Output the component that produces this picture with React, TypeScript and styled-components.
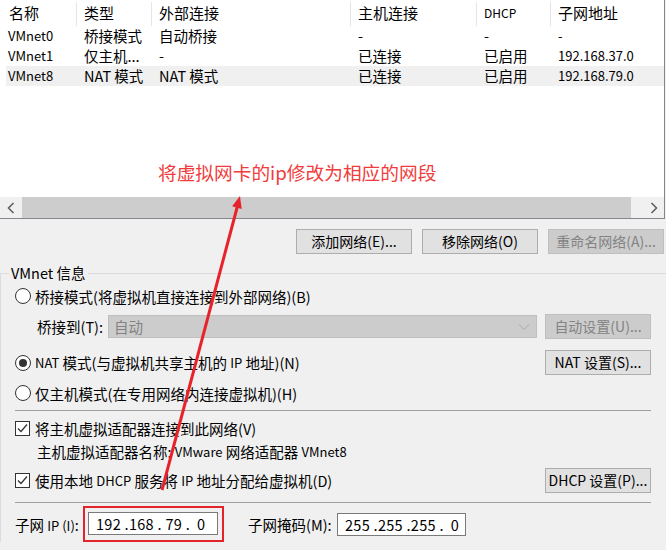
import React from "react";
import styled, { createGlobalStyle } from "styled-components";

const Global = createGlobalStyle`
  html, body { margin: 0; padding: 0; background: #f0f0f0; }
  * { box-sizing: border-box; }
  body { font-family: "Noto Sans CJK SC", "Noto Sans", sans-serif; color: #000; }
`;

const Root = styled.div`
  position: relative;
  width: 666px;
  height: 550px;
  overflow: hidden;
  background: #f0f0f0;
  font-size: 14px;
`;

const COLS = "77px 75px 199px 126px 74px 1fr";
const ROWCOLS = "71px 75px 199px 126px 74px 1fr";

const ListView = styled.div`
  width: 665px;
  height: 219px;
  background: #fff;
  border-right: 1px solid #828790;
  border-bottom: 1px solid #828790;
  display: flex;
  flex-direction: column;
`;

const Header = styled.div`
  display: grid;
  grid-template-columns: ${COLS};
  height: 26px;
`;

const HeaderCell = styled.div<{ $small?: boolean; $first?: boolean; $last?: boolean }>`
  display: flex;
  align-items: center;
  padding-left: ${(p) => (p.$first ? 9 : 7)}px;
  padding-bottom: 4px;
  margin-top: 2px;
  height: 24px;
  font-size: ${(p) => (p.$small ? 12 : 15)}px;
  border-right: ${(p) => (p.$last ? "none" : "1px solid #e5e5e5")};
  white-space: nowrap;
`;

const Row = styled.div<{ $selected?: boolean }>`
  display: grid;
  grid-template-columns: ${ROWCOLS};
  height: 20px;
  margin-left: 6px;
  background: ${(p) => (p.$selected ? "#f0f0f0" : "transparent")};
`;

const Cell = styled.div<{ $small?: boolean; $first?: boolean }>`
  display: flex;
  align-items: center;
  padding-left: ${(p) => (p.$first ? 2 : 7)}px;
  padding-bottom: 2px;
  font-size: ${(p) => (p.$small ? 13 : 14.5)}px;
  white-space: nowrap;
  overflow: hidden;
`;

const Filler = styled.div`
  flex: 1;
`;

const ScrollBar = styled.div`
  display: flex;
  height: 21px;
  background: #f0f0f0;
`;

const ScrollArrow = styled.div<{ $w: number }>`
  width: ${(p) => p.$w}px;
  display: flex;
  align-items: center;
  justify-content: center;
`;

const Thumb = styled.div`
  width: 609px;
  background: #cdcdcd;
`;

const Track = styled.div`
  flex: 1;
`;

const ButtonRow = styled.div`
  display: flex;
  justify-content: flex-end;
  gap: 10px;
  padding: 10px 2px 0 0;
`;

const Button = styled.div<{ $w?: number; $disabled?: boolean }>`
  width: ${(p) => p.$w ?? 116}px;
  height: 25px;
  flex: none;
  display: flex;
  align-items: center;
  justify-content: center;
  font-size: 14px;
  padding-bottom: 1px;
  background: ${(p) => (p.$disabled ? "#cccccc" : "#e1e1e1")};
  border: 1px solid ${(p) => (p.$disabled ? "#bfbfbf" : "#adadad")};
  color: ${(p) => (p.$disabled ? "#838383" : "#000")};
  white-space: nowrap;
`;

const Group = styled.fieldset`
  margin: 9px 0 0 0;
  padding: 0 15px 0 14px;
  width: 666px;
  border: 1px solid #dcdcdc;
  border-right: none;
  border-bottom: none;
  min-inline-size: 0;
`;

const Legend = styled.legend`
  margin-left: -6px;
  padding: 0 2px;
  font-size: 14.5px;
  line-height: 20px;
`;

const Line = styled.div<{ $top: number; $h: number; $indent?: number }>`
  display: flex;
  align-items: center;
  margin-top: ${(p) => p.$top}px;
  height: ${(p) => p.$h}px;
  padding-left: ${(p) => p.$indent ?? 0}px;
  font-size: 14.5px;
  white-space: nowrap;
`;

const Radio = styled.span<{ $checked?: boolean }>`
  width: 16px;
  height: 16px;
  flex: none;
  border-radius: 50%;
  border: 1px solid #333;
  background: #fff;
  margin-right: 4px;
  display: flex;
  align-items: center;
  justify-content: center;
  &::after {
    content: "";
    width: 8px;
    height: 8px;
    border-radius: 50%;
    background: ${(p) => (p.$checked ? "#333" : "transparent")};
  }
`;

const CheckBox = styled.span`
  width: 15px;
  height: 15px;
  flex: none;
  border: 1px solid #333;
  background: #fff;
  margin-right: 5px;
  display: flex;
  align-items: center;
  justify-content: center;
`;

const Select = styled.div`
  margin-left: auto;
  width: 429px;
  height: 23px;
  background: #cccccc;
  border: 1px solid #bfbfbf;
  color: #838383;
  display: flex;
  align-items: center;
  justify-content: space-between;
  padding: 0 6px 0 5px;
  font-size: 14.5px;
`;

const SideButton = styled(Button)`
  margin-left: 8px;
`;

const PushRight = styled(Button)`
  margin-left: auto;
`;

const Separator = styled.div<{ $top: number }>`
  margin-top: ${(p) => p.$top}px;
  height: 1px;
  background: #a0a0a0;
`;

const Small = styled.span`
  font-size: 13px;
`;

const FieldLabel = styled.span<{ $w?: number }>`
  width: ${(p) => (p.$w ? `${p.$w}px` : "auto")};
  flex: none;
`;

const RedBox = styled.span`
  display: flex;
  border: 2px solid #e3222b;
  padding: 4px 4px 5px 3px;
  margin-left: -3px;
`;

const Input = styled.div<{ $w: number }>`
  width: ${(p) => p.$w}px;
  height: 23px;
  background: #fff;
  border: 1px solid #7a7a7a;
  display: flex;
  align-items: center;
  padding-left: 7px;
  font-size: 14.5px;
  letter-spacing: 0.3px;
  white-space: pre;
`;

const MaskLabel = styled.span`
  margin-left: 24px;
  width: 89px;
  flex: none;
`;

const Annotation = styled.div`
  position: absolute;
  left: 158px;
  top: 160px;
  color: #f03c3c;
  font-size: 18.7px;
  line-height: 24px;
  white-space: nowrap;
`;

const Overlay = styled.svg`
  position: absolute;
  left: 0;
  top: 0;
  pointer-events: none;
`;

const rows = [
  ["VMnet0", "桥接模式", "自动桥接", "-", "-", "-"],
  ["VMnet1", "仅主机...", "-", "已连接", "已启用", "192.168.37.0"],
  ["VMnet8", "NAT 模式", "NAT 模式", "已连接", "已启用", "192.168.79.0"],
];

const Check = () => (
  <svg width="13" height="13" viewBox="0 0 13 13">
    <polyline points="2,6.5 5,9.5 11,2.5" fill="none" stroke="#333" strokeWidth="1.3" />
  </svg>
);

export default function App() {
  return (
    <Root>
      <Global />
      <ListView>
        <Header>
          <HeaderCell $first>名称</HeaderCell>
          <HeaderCell>类型</HeaderCell>
          <HeaderCell>外部连接</HeaderCell>
          <HeaderCell>主机连接</HeaderCell>
          <HeaderCell $small>DHCP</HeaderCell>
          <HeaderCell $last>子网地址</HeaderCell>
        </Header>
        {rows.map((r, i) => (
          <Row key={r[0]} $selected={i === 2}>
            {r.map((c, j) => (
              <Cell key={j} $first={j === 0} $small={j === 0 || j === 5}>
                {c}
              </Cell>
            ))}
          </Row>
        ))}
        <Filler />
        <ScrollBar>
          <ScrollArrow $w={22}>
            <svg width="8" height="12" viewBox="0 0 8 12">
              <polyline points="6.5,1 1.5,6 6.5,11" fill="none" stroke="#606060" strokeWidth="1.6" />
            </svg>
          </ScrollArrow>
          <Thumb />
          <Track />
          <ScrollArrow $w={20}>
            <svg width="8" height="12" viewBox="0 0 8 12">
              <polyline points="1.5,1 6.5,6 1.5,11" fill="none" stroke="#606060" strokeWidth="1.6" />
            </svg>
          </ScrollArrow>
        </ScrollBar>
      </ListView>

      <ButtonRow>
        <Button>添加网络(E)...</Button>
        <Button>移除网络(O)</Button>
        <Button $disabled>重命名网络(A)...</Button>
      </ButtonRow>

      <Group>
        <Legend>VMnet 信息</Legend>
        <Line $top={1} $h={24}>
          <Radio />
          桥接模式(将虚拟机直接连接到外部网络)(B)
        </Line>
        <Line $top={6} $h={25} $indent={22}>
          <FieldLabel>桥接到(T):</FieldLabel>
          <Select>
            自动
            <svg width="12" height="8" viewBox="0 0 12 8">
              <polyline points="1,1.5 6,6.5 11,1.5" fill="none" stroke="#a8a8a8" strokeWidth="1" />
            </svg>
          </Select>
          <SideButton $w={106} $disabled>
            自动设置(U)...
          </SideButton>
        </Line>
        <Line $top={11} $h={25}>
          <Radio $checked />
          <Small>NAT</Small>&nbsp;模式(与虚拟机共享主机的&nbsp;<Small>IP</Small>&nbsp;地址)(N)
          <PushRight $w={106}>NAT 设置(S)...</PushRight>
        </Line>
        <Line $top={6} $h={24}>
          <Radio />
          仅主机模式(在专用网络内连接虚拟机)(H)
        </Line>
        <Separator $top={5} />
        <Line $top={7} $h={20}>
          <CheckBox>
            <Check />
          </CheckBox>
          将主机虚拟适配器连接到此网络(V)
        </Line>
        <Line $top={3} $h={20} $indent={22}>
          主机虚拟适配器名称:&nbsp;<Small>VMware</Small>&nbsp;网络适配器&nbsp;<Small>VMnet8</Small>
        </Line>
        <Line $top={7} $h={25}>
          <CheckBox>
            <Check />
          </CheckBox>
          使用本地&nbsp;<Small>DHCP</Small>&nbsp;服务将&nbsp;<Small>IP</Small>&nbsp;地址分配给虚拟机(D)
          <PushRight $w={106}>DHCP 设置(P)...</PushRight>
        </Line>
        <Separator $top={9} />
        <Line $top={3} $h={36}>
          <FieldLabel $w={71}>
            子网&nbsp;<Small>IP (I)</Small>:
          </FieldLabel>
          <RedBox>
            <Input $w={130}>{"192 .168 . 79 .  0"}</Input>
          </RedBox>
          <MaskLabel>子网掩码(M):</MaskLabel>
          <Input $w={129}>{"255 .255 .255 .  0"}</Input>
        </Line>
      </Group>

      <Annotation>将虚拟网卡的ip修改为相应的网段</Annotation>
      <Overlay width="666" height="550" viewBox="0 0 666 550">
        <line x1="162" y1="490" x2="237.5" y2="206" stroke="#e8222a" strokeWidth="3" />
        <polygon points="240,196 241.7,209 232.1,206.3" fill="#e8222a" />
      </Overlay>
    </Root>
  );
}
